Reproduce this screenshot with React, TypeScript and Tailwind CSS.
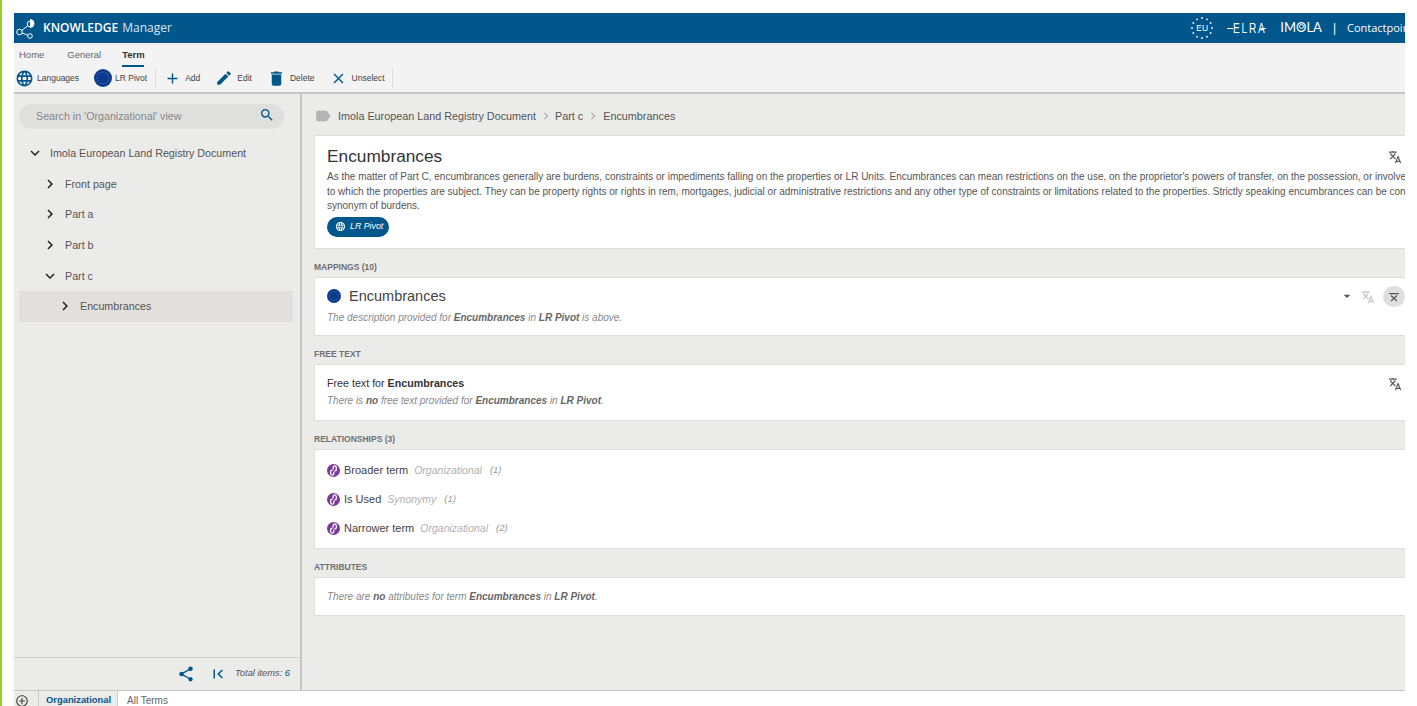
import React from "react";
import {
  MdLanguage, MdAdd, MdEdit, MdDelete, MdClose, MdSearch, MdExpandMore, MdChevronRight,
  MdShare, MdFirstPage, MdLabel, MdAddCircleOutline, MdArrowDropDown,
} from "react-icons/md";

const font = { fontFamily: "'Liberation Sans', Arial, sans-serif" };
const open = { fontFamily: "'Open Sans', sans-serif" };

function TranslateStruck({ size, color, noA, cls = "" }: { size: number; color: string; noA?: boolean; cls?: string }) {
  return (
    <svg width={size} height={size} viewBox="0 0 16 16" fill="none" stroke={color} strokeWidth="1.300" className={cls}>
      {noA ? (
        <path d="M1.500 3.500h13M4 6l8 7.500M12 6 4 13.500" strokeWidth="1.800" />
      ) : (
        <>
          <path d="M1 2.500h9M5.500 1v1.500M2.500 4l6 6.500M8.500 4 2.500 10.500" />
          <path d="M8.500 15l3-7.500 3 7.500M9.700 13h3.600" />
        </>
      )}
    </svg>
  );
}

function EuFlag({ size }: { size: number }) {
  const stars = Array.from({ length: 12 }, (_, i) => i);
  return (
    <svg width={size} height={size} viewBox="0 0 20 20" className="shrink-0">
      <circle cx="10" cy="10" r="10" fill="#0b3a8f" />
      {stars.map((i) => (
        <circle key={i} cx={10 + 6.5 * Math.cos((i * Math.PI) / 6)} cy={10 + 6.5 * Math.sin((i * Math.PI) / 6)} r="0.8" fill="#4a6db0" />
      ))}
    </svg>
  );
}

function EuLogo() {
  const stars = Array.from({ length: 12 }, (_, i) => i);
  return (
    <div className="relative w-[22px] h-[22px] flex items-center justify-center text-[8.500px]">
      <svg width="22" height="22" viewBox="0 0 22 22" className="absolute left-0 top-0">
        {stars.map((i) => (
          <circle key={i} cx={11 + 10 * Math.cos((i * Math.PI) / 6)} cy={11 + 10 * Math.sin((i * Math.PI) / 6)} r="0.9" fill="#fff" />
        ))}
      </svg>
      EU
    </div>
  );
}

function LinkBadge() {
  return (
    <span className="w-[13px] h-[13px] rounded-full bg-[#7b3a96] flex items-center justify-center shrink-0">
      <svg width="11" height="11" viewBox="0 0 12 12" fill="none" stroke="#fff" strokeWidth="1.400" strokeLinecap="round" className="-rotate-45">
        <path d="M5 7.500 3.800 8.700a1.700 1.700 0 0 1-2.400-2.400L3 4.700a1.700 1.700 0 0 1 2.400 0" />
        <path d="M7 4.500 8.200 3.300a1.700 1.700 0 0 1 2.400 2.400L9 7.300a1.700 1.700 0 0 1-2.400 0" />
      </svg>
    </span>
  );
}

function ToolItem({ icon, label, gap, cls = "" }: { icon: React.ReactNode; label: string; gap: string; cls?: string }) {
  return (
    <div className={`flex items-center ${gap} ${cls}`}>
      {icon}
      <span className="text-[8.500px] text-[#444]">{label}</span>
    </div>
  );
}

function TreeRow({ label, isOpen, indent, selected }: { label: string; isOpen?: boolean; indent: string; selected?: boolean }) {
  return (
    <div className={`h-[30.600px] flex items-center ${indent} mx-[5px] w-[274px] ${selected ? "bg-[#e3dfdc]" : ""}`}>
      {isOpen ? <MdExpandMore size={18} color="#222" /> : <MdChevronRight size={18} color="#222" />}
      <span className="ml-[6px] text-[10.700px] text-[#555]">{label}</span>
    </div>
  );
}

function SectionLabel({ children }: { children: React.ReactNode }) {
  return <div className="mt-[13px] text-[8.500px] font-bold text-[#707070] leading-[10px]">{children}</div>;
}

function Relation({ name, kind, count }: { name: string; kind: string; count: string }) {
  return (
    <div className="h-[29px] flex items-center">
      <LinkBadge />
      <span className="ml-[4px] text-[11px] text-[#444]">{name}</span>
      <span className="ml-[6px] text-[10.500px] italic text-[#b0b0b0]">{kind}</span>
      <span className="ml-[8px] text-[9.500px] italic text-[#999]">{count}</span>
    </div>
  );
}

export default function App() {
  return (
    <div className="relative w-[1417px] h-[706px] overflow-hidden bg-white flex" style={font}>
      <div className="w-[2px] h-full bg-[#9acd32] shrink-0" />
      <div className="ml-[12px] mt-[13px] w-[1391px] h-[693px] flex flex-col overflow-hidden bg-[#ebebea]">
        {/* Header */}
        <div className="h-[30px] bg-[#01568c] flex items-center shrink-0 text-white">
          <svg width="22" height="22" viewBox="0 0 22 22" fill="none" stroke="#fff" strokeWidth="1" className="ml-[1px]">
            <circle cx="4.500" cy="15" r="2.800" />
            <circle cx="15" cy="19" r="2.300" />
            <circle cx="15" cy="7" r="2.800" />
            <path d="M6.800 13.500 12.800 8.700M7 16 12.800 18.200" />
            <path d="M15 2.500a4 4 0 0 1 0 8" fill="#fff" />
          </svg>
          <span className="ml-[6px] text-[12px] font-semibold" style={open}>KNOWLEDGE</span>
          <span className="ml-[4px] text-[12px] text-[#dbe7f0]" style={open}>Manager</span>
          <div className="ml-auto flex items-center whitespace-nowrap">
            <EuLogo />
            <div className="ml-[14px] flex items-center">
              <span className="w-[6px] h-px bg-white" />
              <span className="text-[14px] tracking-[2.500px] font-light leading-none w-[28px] inline-block origin-left scale-x-[0.72]" style={{ fontFamily: "'Liberation Sans', sans-serif" }}>ELRA</span>
              <span className="w-[5px] h-px bg-white" />
            </div>
            <span className="ml-[14px] text-[13px] flex items-center" style={{ fontFamily: "Lato, sans-serif" }}>
              IM<span className="relative">O<span className="absolute left-[3px] top-[6px] w-[5px] h-[5px] rounded-full border border-white" /></span>LA
            </span>
            <span className="ml-[11px] text-[12px]">|</span>
            <span className="ml-[11px] text-[11px] w-[58px] overflow-hidden" style={open}>Contactpoint</span>
          </div>
        </div>
        {/* Ribbon */}
        <div className="h-[51px] bg-[#f3f3f3] border-b-2 border-[#c6c6c6] shrink-0">
          <div className="h-[24px] flex items-start pt-[5px] text-[9.500px] text-[#666]">
            <span className="ml-[5px]">Home</span>
            <span className="ml-[23px]">General</span>
            <div className="ml-[21px] flex flex-col items-center">
              <span className="font-bold text-[#333] text-[9.500px]">Term</span>
              <span className="mt-[3px] w-[22px] h-[1.500px] bg-[#01568c]" />
            </div>
          </div>
          <div className="h-[22px] flex items-center pl-[1px] whitespace-nowrap">
            <ToolItem icon={<MdLanguage size={19} color="#01568c" />} label="Languages" gap="gap-[3px]" />
            <ToolItem cls="ml-[15px]" icon={<EuFlag size={18} />} label="LR Pivot" gap="gap-[3px]" />
            <div className="ml-[8px] mr-[8px] w-px h-[20px] bg-[#ddd]" />
            <ToolItem icon={<MdAdd size={17} color="#01568c" />} label="Add" gap="gap-[4px]" />
            <ToolItem cls="ml-[15px]" icon={<MdEdit size={18} color="#01568c" />} label="Edit" gap="gap-[4px]" />
            <ToolItem cls="ml-[15px]" icon={<MdDelete size={19} color="#01568c" />} label="Delete" gap="gap-[4px]" />
            <ToolItem cls="ml-[15px]" icon={<MdClose size={17} color="#01568c" />} label="Unselect" gap="gap-[5px]" />
            <div className="ml-[7px] w-px h-[20px] bg-[#ddd]" />
          </div>
        </div>
        {/* Body */}
        <div className="flex-1 flex min-h-0">
          <aside className="w-[288px] shrink-0 border-r-2 border-[#c6c6c6] flex flex-col">
            <div className="mx-[5px] mt-[10px] h-[25px] w-[265px] rounded-full bg-[#dfdfde] flex items-center pl-[17px] pr-[9px]">
              <span className="text-[10.700px] text-[#888]">Search in 'Organizational' view</span>
              <MdSearch size={16} color="#01568c" className="ml-auto -mt-[3px]" />
            </div>
            <div className="mt-[9px] flex-1">
              <TreeRow label="Imola European Land Registry Document" isOpen indent="pl-[7px]" />
              <TreeRow label="Front page" indent="pl-[22px]" />
              <TreeRow label="Part a" indent="pl-[22px]" />
              <TreeRow label="Part b" indent="pl-[22px]" />
              <TreeRow label="Part c" isOpen indent="pl-[22px]" />
              <TreeRow label="Encumbrances" indent="pl-[37px]" selected />
            </div>
            <div className="h-[33px] border-t border-[#cfcfcf] flex items-center justify-end pr-[10px] whitespace-nowrap">
              <MdShare size={18} color="#01568c" />
              <MdFirstPage size={18} color="#01568c" className="ml-[14px]" />
              <span className="ml-[8px] text-[9.300px] italic text-[#555]">Total items: <span className="text-[#01568c]">6</span></span>
            </div>
          </aside>
          <main className="flex-1 min-w-0 pl-[12px] overflow-hidden">
            <div className="h-[41px] pt-[3px] flex items-center text-[10.800px] text-[#555] whitespace-nowrap">
              <MdLabel size={18} color="#b3b3b3" />
              <span className="ml-[6px]">Imola European Land Registry Document</span>
              <MdChevronRight size={14} color="#aaa" className="mx-[2.500px]" />
              <span>Part c</span>
              <MdChevronRight size={14} color="#aaa" className="mx-[3px]" />
              <span>Encumbrances</span>
            </div>
            <section className="w-[1095px] h-[114px] bg-white border border-[#dedede] pl-[12px] pt-[10px] relative whitespace-nowrap overflow-hidden">
              <h1 className="text-[17.300px] leading-[21px] text-[#333]">Encumbrances</h1>
              <div className="mt-[3px] text-[10px] leading-[14.500px] text-[#555]">
                <div>As the matter of Part C, encumbrances generally are burdens, constraints or impediments falling on the properties or LR Units. Encumbrances can mean restrictions on the use, on the proprietor's powers of transfer, on the possession, or involve rights</div>
                <div>to which the properties are subject. They can be property rights or rights in rem, mortgages, judicial or administrative restrictions and any other type of constraints or limitations related to the properties. Strictly speaking encumbrances can be considered a</div>
                <div>synonym of burdens.</div>
              </div>
              <div className="mt-[3px] inline-flex h-[20px] items-center rounded-full bg-[#01568c] pl-[8px] pr-[6px] text-white">
                <MdLanguage size={11} />
                <span className="ml-[4px] text-[8.800px] italic">LR Pivot</span>
              </div>
              <TranslateStruck size={14} color="#555" cls="absolute right-[6px] top-[14px]" />
            </section>
            <SectionLabel>MAPPINGS (10)</SectionLabel>
            <section className="mt-[5px] w-[1095px] h-[59px] bg-white border border-[#dedede] pl-[12px] relative whitespace-nowrap">
              <div className="mt-[9px] flex items-center">
                <EuFlag size={14} />
                <span className="ml-[8px] text-[14.500px] text-[#444] leading-[18px]">Encumbrances</span>
              </div>
              <div className="mt-[5px] text-[10px] italic text-[#888]">The description provided for <b className="text-[#666]">Encumbrances</b> in <b className="text-[#666]">LR Pivot</b> is above.</div>
              <MdArrowDropDown size={16} color="#555" className="absolute left-[1024px] top-[10px]" />
              <TranslateStruck size={14} color="#c4c4c4" cls="absolute left-[1046px] top-[12px]" />
              <span className="absolute left-[1068px] top-[8px] w-[22px] h-[21px] rounded-full bg-[#dfdfdf] flex items-center justify-center">
                <TranslateStruck size={12} color="#555" noA />
              </span>
            </section>
            <SectionLabel>FREE TEXT</SectionLabel>
            <section className="mt-[5px] w-[1095px] h-[57px] bg-white border border-[#dedede] pl-[12px] pt-[12px] relative whitespace-nowrap">
              <div className="text-[10.700px] leading-[13px] text-[#333]">Free text for <b>Encumbrances</b></div>
              <div className="mt-[5px] text-[10px] italic leading-[12px] text-[#888]">There is <b className="text-[#666]">no</b> free text provided for <b className="text-[#666]">Encumbrances</b> in <b className="text-[#666]">LR Pivot</b>.</div>
              <TranslateStruck size={14} color="#555" cls="absolute right-[6px] top-[12px]" />
            </section>
            <SectionLabel>RELATIONSHIPS (3)</SectionLabel>
            <section className="mt-[5px] w-[1095px] h-[100px] bg-white border border-[#dedede] pl-[12px] pt-[6px] whitespace-nowrap">
              <Relation name="Broader term" kind="Organizational" count="(1)" />
              <Relation name="Is Used" kind="Synonymy" count="(1)" />
              <Relation name="Narrower term" kind="Organizational" count="(2)" />
            </section>
            <SectionLabel>ATTRIBUTES</SectionLabel>
            <section className="mt-[5px] w-[1095px] h-[39px] bg-white border border-[#dedede] pl-[12px] flex items-center whitespace-nowrap">
              <div className="text-[10px] italic text-[#888]">There are <b className="text-[#666]">no</b> attributes for term <b className="text-[#666]">Encumbrances</b> in <b className="text-[#666]">LR Pivot</b>.</div>
            </section>
          </main>
        </div>
        {/* Tabs */}
        <div className="h-[16px] shrink-0 bg-[#f3f3f3] border-t border-[#c6c6c6] flex text-[9.400px] font-bold whitespace-nowrap">
          <div className="w-[25px] bg-[#ebebea] border-r border-[#ccc] flex items-center pl-[1px]">
            <MdAddCircleOutline size={14} color="#444" className="mt-[4px]" />
          </div>
          <div className="w-[79px] bg-[#ebebea] border-r border-[#ccc] text-[#01568c] pl-[7px] pt-[2px]">Organizational</div>
          <div className="w-[90px] bg-white text-[#666] pl-[9px] pt-[2px] text-[10px] font-normal">All Terms</div>
          <div className="flex-1 bg-white" />
        </div>
      </div>
    </div>
  );
}
